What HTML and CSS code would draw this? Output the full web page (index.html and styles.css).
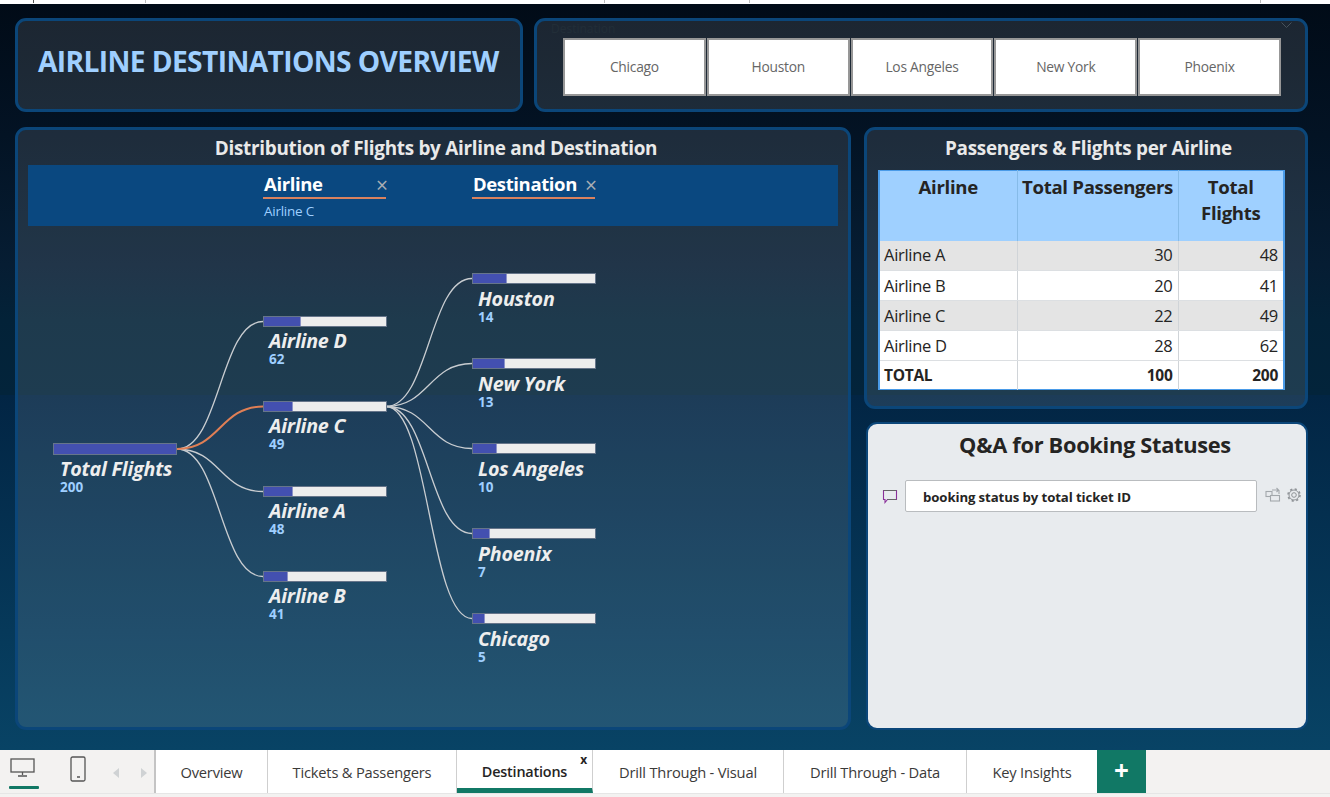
FILE: index.html
```html
<!DOCTYPE html>
<html lang="en">
<head>
<meta charset="utf-8">
<title>Airline Destinations Overview</title>
<link rel="stylesheet" href="styles.css">
</head>
<body>
<div class="topstrip"><i class="tick t1"></i><i class="tick t2"></i><i class="tick t3"></i><i class="tick t4"></i><i class="tick t5"></i></div>
<main class="canvas">
  <section class="row-top">
    <div class="panel title-panel"><h1>AIRLINE DESTINATIONS OVERVIEW</h1></div>
    <div class="panel slicer-panel">
      <div class="slicer-head"><span class="slicer-name">Destination</span>
        <svg class="chev" width="11" height="6" viewBox="0 0 11 6"><path d="M.5.5l5 5 5-5" fill="none" stroke="#46525c"/></svg>
      </div>
      <div class="slicer">
        <div class="sbtn">Chicago</div><div class="sbtn">Houston</div><div class="sbtn">Los Angeles</div><div class="sbtn">New York</div><div class="sbtn">Phoenix</div>
      </div>
    </div>
  </section>
  <section class="row-main">
    <div class="panel tree-panel">
      <h2>Distribution of Flights by Airline and Destination</h2>
      <div class="tree-head">
        <div class="tcol"><div class="tcol-top"><span>Airline</span><b class="x">×</b></div><div class="tcol-sub">Airline C</div></div>
        <div class="tcol"><div class="tcol-top"><span>Destination</span><b class="x">×</b></div></div>
      </div>
      <div class="tree">
        <svg class="links" width="830" height="500" viewBox="0 0 830 500">
          <g fill="none" stroke="#c9cdd1" stroke-width="1.3">
            <path d="M159 223C202 223 202 95.5 245 95.5"/>
            <path d="M159 223C202 223 202 265.5 245 265.5"/>
            <path d="M159 223C202 223 202 350.5 245 350.5"/>
            <path d="M368 180.500C411 180.500 411 52.500 454 52.500"/>
            <path d="M368 180.500C411 180.500 411 137.500 454 137.500"/>
            <path d="M368 180.500C411 180.500 411 222.500 454 222.500"/>
            <path d="M368 180.500C411 180.500 411 307.500 454 307.500"/>
            <path d="M368 180.500C411 180.500 411 392.500 454 392.500"/>
          </g>
          <path d="M159 223C202 223 202 180.500 245 180.500" fill="none" stroke="#e07f55" stroke-width="2"/>
        </svg>
        <div class="node c1 r-total"><div class="bar total"><i style="width:100%"></i></div><div class="name">Total Flights</div><div class="val">200</div></div>
        <div class="node c2 r-d"><div class="bar"><i style="width:31%"></i></div><div class="name">Airline D</div><div class="val">62</div></div>
        <div class="node c2 r-c"><div class="bar"><i style="width:24.500%"></i></div><div class="name">Airline C</div><div class="val">49</div></div>
        <div class="node c2 r-a"><div class="bar"><i style="width:24%"></i></div><div class="name">Airline A</div><div class="val">48</div></div>
        <div class="node c2 r-b"><div class="bar"><i style="width:20.500%"></i></div><div class="name">Airline B</div><div class="val">41</div></div>
        <div class="node c3 r-hou"><div class="bar"><i style="width:28.600%"></i></div><div class="name">Houston</div><div class="val">14</div></div>
        <div class="node c3 r-ny"><div class="bar"><i style="width:26.500%"></i></div><div class="name">New York</div><div class="val">13</div></div>
        <div class="node c3 r-la"><div class="bar"><i style="width:20.400%"></i></div><div class="name">Los Angeles</div><div class="val">10</div></div>
        <div class="node c3 r-ph"><div class="bar"><i style="width:14.300%"></i></div><div class="name">Phoenix</div><div class="val">7</div></div>
        <div class="node c3 r-ch"><div class="bar"><i style="width:10.200%"></i></div><div class="name">Chicago</div><div class="val">5</div></div>
      </div>
    </div>
    <div class="side">
      <div class="panel table-panel">
        <h2>Passengers &amp; Flights per Airline</h2>
        <table class="grid">
          <thead><tr><th class="w1">Airline</th><th class="w2">Total Passengers</th><th class="w3">Total Flights</th></tr></thead>
          <tbody>
            <tr class="odd"><td>Airline A</td><td class="num">30</td><td class="num">48</td></tr>
            <tr class="r2"><td>Airline B</td><td class="num">20</td><td class="num">41</td></tr>
            <tr class="odd r3"><td>Airline C</td><td class="num">22</td><td class="num">49</td></tr>
            <tr class="r4"><td>Airline D</td><td class="num">28</td><td class="num">62</td></tr>
          </tbody>
          <tfoot><tr><td>TOTAL</td><td class="num">100</td><td class="num">200</td></tr></tfoot>
        </table>
      </div>
      <div class="panel qa-panel">
        <h3>Q&amp;A for Booking Statuses</h3>
        <div class="qa-row">
          <svg class="qa-ic" width="16" height="15" viewBox="0 0 16 15"><path d="M1.500 1.500h13v9H5.500L3 13.500v-3H1.500z" fill="none" stroke="#8a2f9a" stroke-width="1.100"/><path d="M1.500 1.500h13M5.500 10.500h9" fill="none" stroke="#666" stroke-width="1.100"/></svg>
          <div class="qa-input">booking status by total ticket ID</div>
          <svg class="qa-act" width="16" height="15" viewBox="0 0 16 15"><g fill="none" stroke="#a3a8ac" stroke-width="1.100"><rect x="1" y="4.500" width="6" height="5"/><rect x="5.500" y="8.500" width="9" height="5.500" fill="#e8ebee"/><path d="M7 3h6.500M11.500 1l2 2-2 2M14 3v4"/></g></svg>
          <svg class="qa-act gear" width="16" height="16" viewBox="0 0 16 16"><g fill="none" stroke="#8f9397"><circle cx="8" cy="8" r="2.300" stroke-width="1"/><circle cx="8" cy="8" r="5" stroke-width="1"/><circle cx="8" cy="8" r="6" stroke-width="1.500" stroke-dasharray="2.200 2.512"/></g></svg>
        </div>
      </div>
    </div>
  </section>
</main>
<footer class="tabs">
  <div class="views">
    <div class="view on">
      <svg width="26" height="20" viewBox="0 0 26 20"><rect x="1" y="1" width="23" height="13" fill="none" stroke="#555" stroke-width="1.300"/><path d="M12.500 14v3M8 18h9" fill="none" stroke="#555" stroke-width="1.300"/></svg>
    </div>
    <div class="view phone">
      <svg width="16" height="26" viewBox="0 0 16 26"><rect x="1" y="1" width="14" height="24" rx="1.500" fill="none" stroke="#555" stroke-width="1.300"/><path d="M7 21h3" stroke="#555" stroke-width="1.500"/></svg>
    </div>
    <div class="arrows">
      <svg width="8" height="12" viewBox="0 0 8 12"><path d="M7 1v10L1 6z" fill="#cfd2d4"/></svg>
      <svg width="8" height="12" viewBox="0 0 8 12"><path d="M1 1v10l6-5z" fill="#cfd2d4"/></svg>
    </div>
  </div>
  <div class="tab tab-ov">Overview</div>
  <div class="tab tab-tp">Tickets &amp; Passengers</div>
  <div class="tab tab-de active">Destinations<span class="close">x</span></div>
  <div class="tab tab-dv">Drill Through - Visual</div>
  <div class="tab tab-dd">Drill Through - Data</div>
  <div class="tab tab-ki">Key Insights</div>
  <div class="add">+</div>
</footer>
</body>
</html>
```
FILE: styles.css
```css
* { box-sizing: border-box; }
html, body { margin: 0; height: 100%; }
body {
  width: 1330px; height: 797px; overflow: hidden;
  font-family: "Open Sans", "Noto Sans", "Liberation Sans", sans-serif;
  background: #f3f2f1; display: flex; flex-direction: column;
}
.topstrip { height: 4px; background: #fff; position: relative; flex: none; }
.tick { position: absolute; top: 0; width: 1px; height: 3px; background: #bbb; }
.t1 { left: 33px; background: #555; } .t2 { left: 145px; } .t3 { left: 604px; } .t4 { left: 749px; } .t5 { left: 1260px; }

.canvas {
  height: 746px; flex: none; padding: 14px 22px 0 15px; display: flex; flex-direction: column; gap: 15px;
  background: linear-gradient(180deg, #010b17 0, #031324 131px, #061d33 261px, #032238 316px, #03243b 391px, #022544 391px, #084365 746px);
}
.panel { border: 3px solid #0b4679; border-radius: 11px; background: rgba(255,255,255,.11); }
.row-top { display: flex; gap: 11px; height: 94px; flex: none; }
.title-panel { width: 508px; padding: 23px 0 0 20px; }
h1 { margin: 0; font-size: 28.200px; line-height: 34px; font-weight: 700; color: #9fcfff; letter-spacing: -.62px; white-space: nowrap; }
.slicer-panel { width: 774px; padding: 0 24px 0 26px; }
.slicer-head { height: 17px; display: flex; justify-content: space-between; align-items: flex-start; }
.slicer-name { font-size: 12px; line-height: 14px; margin-top: 1px; color: #222e38; margin-left: -12px; }
.chev { margin-right: -11px; margin-top: 1px; }
.slicer { display: flex; gap: 1px; }
.sbtn { width: 143px; height: 58px; background: #fff; border: 2px solid #979797; display: flex; align-items: center; justify-content: center; font-size: 13.800px; color: #666; letter-spacing: -.25px; padding-bottom: 1px; }

.row-main { display: flex; gap: 13px; height: 603px; flex: none; }
.tree-panel { width: 836px; display: flex; flex-direction: column; }
h2 { margin: 0; font-size: 18.900px; font-weight: 700; color: #e9e9e9; text-align: center; letter-spacing: -.28px; line-height: 25px; padding: 6px 0 0 6px; height: 35px; white-space: nowrap; }
.tree-head { height: 61px; flex: none; margin: 0 10px; background: #0a4880; padding: 7px 0 0 235px; display: flex; gap: 86px; }
.tcol { width: 123px; }
.tcol-top { display: flex; justify-content: space-between; height: 27px; border-bottom: 2px solid #d9825f; color: #fff; font-size: 18.500px; font-weight: 700; line-height: 24px; letter-spacing: -.38px; padding-left: 1px; }
.x { color: #a9aeb4; font-weight: 400; font-size: 21px; line-height: 27px; letter-spacing: 0; margin-right: -2px; }
.tcol-sub { font-size: 13.500px; color: #9fcfff; line-height: 18px; margin-top: 3px; padding-left: 1px; letter-spacing: -.25px; }

.tree { position: relative; flex: 1; }
.links { position: absolute; left: 0; top: 0; }
.node { position: absolute; width: 124px; }
.c1 { left: 35px; } .c2 { left: 245px; } .c3 { left: 454px; }
.r-total { top: 217px; } .r-d { top: 90px; } .r-c { top: 175px; } .r-a { top: 260px; } .r-b { top: 345px; }
.r-hou { top: 47px; } .r-ny { top: 132px; } .r-la { top: 217px; } .r-ph { top: 302px; } .r-ch { top: 387px; }
.bar { height: 11px; background: #ededed; outline: 1px solid #66758a; outline-offset: -1px; display: flex; }
.bar i { display: block; height: 100%; background: #4350b0; border-right: 1px solid #8a92c8; }
.bar.total { height: 12px; }
.name { font-size: 19.700px; font-weight: 700; font-style: italic; color: #eee; line-height: 24px; margin: 3px 0 0 6px; white-space: nowrap; letter-spacing: -.2px; }
.c2 .name, .c1 .name { margin-top: 2px; }
.c1 .name, .c1 .val { margin-left: 7px; }
.val { font-size: 13.500px; font-weight: 700; color: #9fcfff; line-height: 13px; margin: 0 0 0 6px; }

.side { width: 444px; display: flex; flex-direction: column; gap: 13px; }
.table-panel { height: 282px; }
.table-panel h2 { padding-left: 5px; }
.grid { width: 407px; margin: 5px 0 0 11px; border-collapse: collapse; table-layout: fixed; border-style: solid; border-color: #4a9be8; border-width: 1px 2px; background: #fff; color: #252423; }
.w1 { width: 138px; } .w2 { width: 161px; }
.grid th { height: 70px; background: #9fd0ff; font-size: 18.600px; font-weight: 700; line-height: 26px; vertical-align: top; padding: 3px 2px 0; border-right: 1px solid #86bbe8; letter-spacing: -.3px; color: #252423; }
.grid th:last-child { border-right: 0; }
.grid td { height: 30px; font-size: 16.500px; padding: 0 5px 0 4px; border-right: 1px solid #d0d4d8; border-bottom: 1px solid #dcdfe2; letter-spacing: -.3px; line-height: 20px; }
.grid td:last-child { border-right: 0; }
.grid .num { text-align: right; }
.grid tr.odd td { background: #e4e4e4; }
.grid tfoot td { height: 29px; font-weight: 700; font-size: 15.500px; border-bottom: 0; }
.qa-panel { height: 308px; margin-left: 2px; background: #e8ebee; padding: 0 0 0 14px; border-width: 2px; }
h3 { margin: 0 0 0 2px; font-size: 21.800px; font-weight: 700; color: #252423; text-align: center; line-height: 28px; padding-top: 7px; height: 56px; letter-spacing: -.3px; white-space: nowrap; }
.qa-row { display: flex; align-items: center; }
.qa-ic { margin-right: 7px; flex: none; }
.qa-input { width: 352px; flex: none; height: 32px; background: #fff; border: 1px solid #b9bcbf; border-radius: 2px; font-size: 13.200px; font-weight: 700; color: #252423; line-height: 32px; padding-left: 17px; margin-right: 8px; letter-spacing: -.1px; }
.qa-act { flex: none; margin-right: 5px; margin-top: -4px; }
.qa-act.gear { margin-top: -3px; }

.tabs { height: 44px; flex: none; display: flex; background: #fff; border-bottom: 1px solid #e6e6e6; }
.views { width: 156px; flex: none; background: #f3f2f1; border-right: 2px solid #c4c4c4; display: flex; position: relative; }
.view { display: flex; justify-content: center; }
.view.on { width: 46px; padding-top: 8px; position: relative; }
.view.on::after { content: ""; position: absolute; left: 9px; top: 36px; width: 30px; height: 3px; background: #117865; border-radius: 1px; }
.view.phone { width: 22px; margin-left: 21px; padding-top: 6px; }
.arrows { display: flex; gap: 20px; margin-left: 23px; padding-top: 17px; }
.arrows svg { display: block; }
.tab { display: flex; align-items: center; justify-content: center; font-size: 14.700px; color: #3b3a39; border-right: 1px solid #cfcfcf; letter-spacing: -.2px; position: relative; background: #fff; }
.tab-ov { width: 112px; } .tab-tp { width: 189px; } .tab-de { width: 136px; } .tab-dv { width: 191px; } .tab-dd { width: 183px; } .tab-ki { width: 130px; border-right: 0; }
.tab.active { font-size: 14.400px; font-weight: 600; color: #252423; border-bottom: 5px solid #117865; padding-top: 5px; }
.close { position: absolute; right: 5px; top: 2px; font-size: 12px; font-weight: 700; color: #252423; line-height: 16px; }
.add { width: 49px; background: #117865; color: #fff; font-size: 26px; font-weight: 700; display: flex; align-items: center; justify-content: center; padding-bottom: 4px; }
.tabs::after { content: ""; flex: 1; background: #f3f2f1; }
```
